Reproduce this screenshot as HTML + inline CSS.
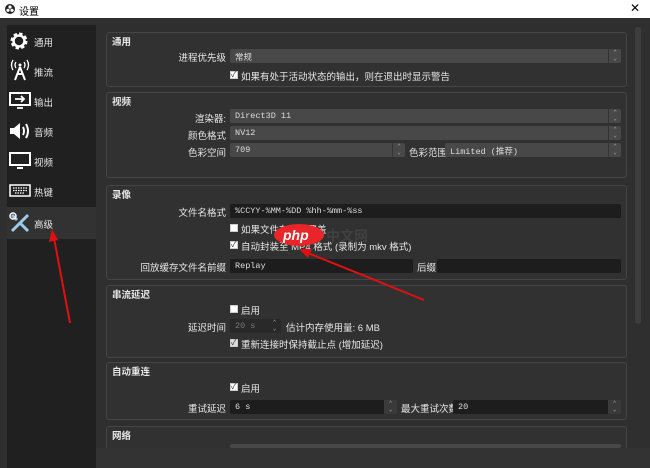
<!DOCTYPE html>
<html><head><meta charset="utf-8"><style>
*{margin:0;padding:0;box-sizing:border-box}
html,body{width:650px;height:468px;overflow:hidden}
body{background:#2f2f2f;font-family:"Liberation Sans","Noto Sans CJK SC",sans-serif;font-size:9.5px;color:#e6e6e6;position:relative}
.a{position:absolute}
.title{left:0;top:0;width:650px;height:18px;background:#fff;color:#000;font-size:10px}
.side{left:7px;top:25px;width:89px;height:443px;background:#202020}
.it{position:absolute;left:0;width:89px;height:30px}
.it span{position:absolute;left:27px;top:9px;font-size:9.5px}
.sel{background:#323232}
.box{position:absolute;left:106px;width:521px;border:1px solid #454545;border-radius:3px;background:#313131}
.gt{position:absolute;font-weight:bold;font-size:9.5px}
.lbl{position:absolute;text-align:right;white-space:nowrap}
.cb{position:absolute;height:14px;background:#484848;border-radius:2px;font-family:"Liberation Mono","Noto Sans CJK SC",monospace;font-size:8.5px;padding:2px 0 0 5px;color:#ddd}
.in{position:absolute;height:14px;background:#1d1d1d;border-radius:2px;font-family:"Liberation Mono","Noto Sans CJK SC",monospace;font-size:8.5px;padding:2px 0 0 5px;color:#ddd}
.arr{position:absolute;right:0;top:0;width:13px;height:14px;border-left:1px solid #333;color:#aaa;font-size:6px;line-height:6px;text-align:center;padding-top:1px}
.chk{position:absolute;width:8px;height:8px;background:#fff;border:1px solid #ccc}
.chk.on::after{content:"✓";position:absolute;left:0;top:-3px;font-size:8px;color:#333}
.ct{position:absolute;white-space:nowrap}
</style></head><body>
<div class="a title"><svg class="a" style="left:5px;top:4px" width="10" height="10"><circle cx="5" cy="5" r="5" fill="#222"/><circle cx="5" cy="3" r="1.6" fill="#fff"/><circle cx="3" cy="6.3" r="1.6" fill="#fff"/><circle cx="7" cy="6.3" r="1.6" fill="#fff"/></svg><span class="a" style="left:19px;top:3px">设置</span><span class="a" style="left:630px;top:1px;font-size:12px">✕</span></div>
<div class="a side">
<div class="it" style="top:1px"><svg class="a" style="left:2px;top:5px" width="20" height="20"><circle cx="10" cy="10" r="6.5" fill="none" stroke="#fff" stroke-width="4" stroke-dasharray="3 2.1"/><circle cx="10" cy="10" r="5.5" fill="none" stroke="#fff" stroke-width="2.5"/></svg><span>通用</span></div>
<div class="it" style="top:31px"><svg class="a" style="left:2px;top:3px" width="22" height="22"><path d="M11 8 L6 21 M11 8 L16 21 M8 15 H14" stroke="#fff" stroke-width="2" fill="none"/><circle cx="11" cy="6" r="1.5" fill="#fff"/><path d="M7 3 Q5 6 7 9 M15 3 Q17 6 15 9 M4 1 Q1 6 4 11 M18 1 Q21 6 18 11" stroke="#fff" fill="none" stroke-width="1.3"/></svg><span>推流</span></div>
<div class="it" style="top:61px"><svg class="a" style="left:2px;top:6px" width="22" height="18"><rect x="1" y="1" width="20" height="12" fill="none" stroke="#fff" stroke-width="2"/><path d="M8 16 H14 M6 7 H15 M12 4 L15 7 L12 10" stroke="#fff" stroke-width="1.8" fill="none"/></svg><span>输出</span></div>
<div class="it" style="top:91px"><svg class="a" style="left:2px;top:6px" width="22" height="18"><path d="M1 6 H5 L11 1 V17 L5 12 H1Z" fill="#fff"/><path d="M14 5 Q16 9 14 13 M17 2 Q21 9 17 16" stroke="#fff" stroke-width="2" fill="none"/></svg><span>音频</span></div>
<div class="it" style="top:121px"><svg class="a" style="left:2px;top:6px" width="22" height="18"><rect x="1" y="1" width="20" height="12" fill="none" stroke="#fff" stroke-width="2"/><path d="M8 16 H14" stroke="#fff" stroke-width="2"/></svg><span>视频</span></div>
<div class="it" style="top:151px"><svg class="a" style="left:2px;top:8px" width="22" height="14"><rect x="1" y="1" width="20" height="11" fill="none" stroke="#fff" stroke-width="1.5"/><path d="M4 4 H18 M4 6.5 H18 M6 9 H16" stroke="#fff" stroke-width="1.2" stroke-dasharray="1.5 1"/></svg><span>热键</span></div>
<div class="it sel" style="top:182px;height:32px"><svg class="a" style="left:2px;top:5px" width="22" height="22"><path d="M3 19 L19 3 M3 3 L8 8 M12 12 L19 19" stroke="#9ecbe8" stroke-width="3" fill="none"/><circle cx="4" cy="4" r="3" fill="none" stroke="#fff" stroke-width="1.5"/></svg><span style="top:10px">高级</span></div>
</div>
<div class="a" style="left:635px;top:27px;width:6px;height:297px;background:#3d3d3d;border-radius:3px"></div>

<div class="box" style="top:32px;height:55px"><span class="gt" style="left:5px;top:1px">通用</span></div>
<span class="lbl" style="right:424px;top:50px">进程优先级</span>
<div class="cb" style="left:230px;top:49px;width:391px">常规<div class="arr">⌃<br>⌄</div></div>
<div class="chk on" style="left:230px;top:71px"></div><span class="ct" style="left:241px;top:69px">如果有处于活动状态的输出，则在退出时显示警告</span>

<div class="box" style="top:92px;height:86px"><span class="gt" style="left:5px;top:1px">视频</span></div>
<span class="lbl" style="right:424px;top:111px">渲染器:</span>
<div class="cb" style="left:230px;top:109px;width:391px">Direct3D 11<div class="arr">⌃<br>⌄</div></div>
<span class="lbl" style="right:424px;top:128px">颜色格式</span>
<div class="cb" style="left:230px;top:126px;width:391px">NV12<div class="arr">⌃<br>⌄</div></div>
<span class="lbl" style="right:424px;top:145px">色彩空间</span>
<div class="cb" style="left:230px;top:143px;width:175px">709<div class="arr">⌃<br>⌄</div></div>
<span class="ct" style="left:409px;top:145px">色彩范围</span>
<div class="cb" style="left:445px;top:143px;width:176px">Limited (推荐)<div class="arr">⌃<br>⌄</div></div>

<div class="box" style="top:185px;height:95px"><span class="gt" style="left:5px;top:1px">录像</span></div>
<span class="lbl" style="right:424px;top:205px">文件名格式</span>
<div class="in" style="left:230px;top:204px;width:391px">%CCYY-%MM-%DD %hh-%mm-%ss</div>
<div class="chk" style="left:230px;top:224px"></div><span class="ct" style="left:241px;top:222px">如果文件存在则覆盖</span>
<div class="chk on" style="left:230px;top:241px"></div><span class="ct" style="left:241px;top:239px">自动封装至 MP4 格式 (录制为 mkv 格式)</span>
<span class="lbl" style="right:424px;top:260px">回放缓存文件名前缀</span>
<div class="in" style="left:230px;top:259px;width:183px">Replay</div>
<span class="ct" style="left:417px;top:260px">后缀</span>
<div class="in" style="left:437px;top:259px;width:184px"></div>

<div class="box" style="top:285px;height:73px"><span class="gt" style="left:5px;top:1px">串流延迟</span></div>
<div class="chk" style="left:230px;top:305px"></div><span class="ct" style="left:241px;top:303px">启用</span>
<span class="lbl" style="right:424px;top:320px">延迟时间</span>
<div class="in" style="left:230px;top:319px;width:51px;background:#292929;color:#777">20 s<div class="arr" style="border:0">⌃<br>⌄</div></div>
<span class="ct" style="left:286px;top:320px">估计内存使用量: 6 MB</span>
<div class="chk on" style="left:230px;top:339px;background:#ddd"></div><span class="ct" style="left:241px;top:337px">重新连接时保持截止点 (增加延迟)</span>

<div class="box" style="top:362px;height:58px"><span class="gt" style="left:5px;top:1px">自动重连</span></div>
<div class="chk on" style="left:230px;top:383px"></div><span class="ct" style="left:241px;top:381px">启用</span>
<span class="lbl" style="right:424px;top:401px">重试延迟</span>
<div class="in" style="left:230px;top:400px;width:167px">6 s<div class="arr" style="border:0;background:#3a3a3a">⌃<br>⌄</div></div>
<span class="ct" style="left:401px;top:401px">最大重试次数</span>
<div class="in" style="left:453px;top:400px;width:168px">20<div class="arr" style="border:0;background:#3a3a3a">⌃<br>⌄</div></div>

<div class="box" style="top:426px;height:30px"><span class="gt" style="left:5px;top:1px">网络</span></div>
<div class="cb" style="left:230px;top:444px;width:391px;height:4px;padding:0"></div>
<div class="a" style="left:96px;top:448px;width:554px;height:20px;background:#333"></div>

<svg class="a" style="left:0;top:0" width="650" height="468">
<path d="M70 323 L54 238" stroke="#e01010" stroke-width="2" fill="none"/><path d="M52 229 L49 242 L58 240Z" fill="#e01010"/>
<path d="M424 300 L308 253" stroke="#e01010" stroke-width="2" fill="none"/><path d="M299 249 L308 258 L312 249Z" fill="#e01010"/>
<ellipse cx="299" cy="235" rx="25" ry="11" fill="#e8262a"/>
<text x="283" y="240" fill="#fff" font-family="Liberation Sans" font-style="italic" font-weight="bold" font-size="14">php</text>
<text x="326" y="241" fill="#444" font-family="Noto Sans CJK SC" font-weight="bold" font-size="14" opacity="0.8">中文网</text>
</svg>
</body></html>
